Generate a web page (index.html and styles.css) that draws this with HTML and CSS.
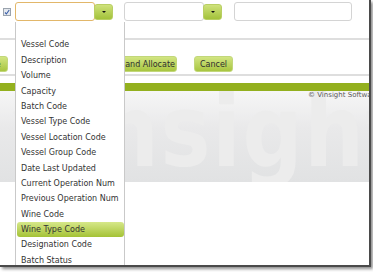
FILE: index.html
```html
<!DOCTYPE html>
<html lang="en">
<head>
  <meta charset="UTF-8">
  <meta name="viewport" content="width=device-width, initial-scale=1">
  <title>Vessel Filter</title>
  <link rel="stylesheet" href="styles.css">
</head>
<body>
  <div class="frame">
    <div class="filters">
      <span class="check">
        <svg width="8" height="8" viewBox="0 0 8 8"><rect x="0.5" y="0.5" width="7" height="7" fill="#e4e8ee" stroke="#9aa3ad"/><path d="M2 4.5 L3.4 6 L6.2 2" fill="none" stroke="#3b5fa8" stroke-width="1.1"/></svg>
      </span>
      <div class="combo">
        <div class="field field-active"></div>
        <button class="drop"><span class="arrow"></span></button>
      </div>
      <div class="combo">
        <div class="field"></div>
        <button class="drop"><span class="arrow"></span></button>
      </div>
      <div class="field field-wide"></div>
    </div>

    <div class="rule rule-top"></div>

    <div class="actions">
      <button class="btn btn-save">Save</button>
      <button class="btn btn-alloc">Save and Allocate</button>
      <button class="btn btn-cancel">Cancel</button>
    </div>

    <div class="rule rule-bottom"></div>
    <div class="band"></div>

    <div class="footer">
      <div class="copy">© Vinsight Software</div>
      <div class="mark">vinsight</div>
    </div>

    <ul class="menu">
      <li>&nbsp;</li>
      <li>Vessel Code</li>
      <li>Description</li>
      <li>Volume</li>
      <li>Capacity</li>
      <li>Batch Code</li>
      <li>Vessel Type Code</li>
      <li>Vessel Location Code</li>
      <li>Vessel Group Code</li>
      <li>Date Last Updated</li>
      <li>Current Operation Num</li>
      <li>Previous Operation Num</li>
      <li>Wine Code</li>
      <li class="selected">Wine Type Code</li>
      <li>Designation Code</li>
      <li>Batch Status</li>
    </ul>
  </div>
</body>
</html>
```

FILE: styles.css
```css
body {
  margin: 0;
  background: #fff;
  font-family: 'DejaVu Sans', Verdana, sans-serif;
  width: 373px;
  height: 272px;
  overflow: hidden;
}

.frame {
  position: relative;
  width: 369px;
  height: 265px;
  background: #fff;
  border-right: 2px solid #4a4a4a;
  border-bottom: 2px solid #4a4a4a;
  box-shadow: 2px 2px 3px rgba(0, 0, 0, 0.45);
  overflow: hidden;
}

.filters {
  display: flex;
  align-items: center;
  padding-top: 2px;
  height: 19px;
}

.check {
  display: flex;
  margin: 0 4px 0 3px;
}

.combo {
  display: flex;
  align-items: center;
  margin-right: 11px;
}

.combo + .combo {
  margin-right: 12px;
}

.field {
  box-sizing: border-box;
  width: 80px;
  height: 19px;
  border: 1px solid #d4d4d4;
  border-radius: 3px;
  background: #fff;
}

.field-active {
  border-color: #e2b76a;
}

.field-wide {
  width: 118px;
}

.drop {
  box-sizing: border-box;
  width: 19px;
  height: 16px;
  margin-left: -1px;
  padding: 0;
  border: 1px solid #b9cf63;
  border-radius: 3px;
  background: linear-gradient(#cfe27c, #a3c23a);
  display: flex;
  align-items: center;
  justify-content: center;
}

.arrow {
  width: 0;
  height: 0;
  border-left: 2px solid transparent;
  border-right: 2px solid transparent;
  border-top: 2px solid #111;
  margin-top: 1px;
}

.rule {
  height: 2px;
  background: #dedede;
}

.rule-top {
  margin-top: 17px;
}

.actions {
  display: flex;
  margin: 16px 0 0 -28px;
  height: 16px;
}

.btn {
  box-sizing: border-box;
  height: 16px;
  padding: 0 8px;
  border: 1px solid #c2d77a;
  border-radius: 3px;
  background: linear-gradient(#d2e582, #a8c540);
  font-family: 'DejaVu Sans', Verdana, sans-serif;
  font-size: 8px;
  color: #2e2e2e;
  white-space: nowrap;
}

.btn-save {
  width: 36px;
}

.btn-alloc {
  margin-left: 86px;
  width: 83px;
}

.btn-cancel {
  margin-left: 17px;
  width: 39px;
  padding: 0;
}

.rule-bottom {
  margin-top: 2px;
}

.band {
  margin-top: 7px;
  height: 8px;
  background: #93b01e;
}

.footer {
  height: 91px;
  background: linear-gradient(#f6f6f6, #e9e9ea 40%, #e1e2e3);
  overflow: hidden;
}

.copy {
  position: relative;
  z-index: 1;
  padding: 0 0 0 308px;
  font-size: 7px;
  color: #5a5a5a;
  white-space: nowrap;
  height: 9px;
}

.mark {
  margin: -18px 0 0 12px;
  font-size: 100px;
  font-weight: bold;
  letter-spacing: 2px;
  line-height: 1;
  color: #ececec;
  white-space: nowrap;
  transform: scaleX(0.84);
  transform-origin: left top;
}

.menu {
  position: absolute;
  z-index: 2;
  left: 15px;
  top: 22px;
  width: 108px;
  margin: 0;
  padding: 0;
  list-style: none;
  background: #fff;
  border-left: 1px solid #c9c9c9;
  border-right: 1px solid #c9c9c9;
}

.menu li {
  height: 15.4px;
  line-height: 15.4px;
  margin: 0 0 0 1px;
  padding-left: 4px;
  font-size: 8px;
  color: #333;
  white-space: nowrap;
}

.menu li.selected {
  border-radius: 3px;
  background: linear-gradient(#d6e889, #a4c236);
}
```
